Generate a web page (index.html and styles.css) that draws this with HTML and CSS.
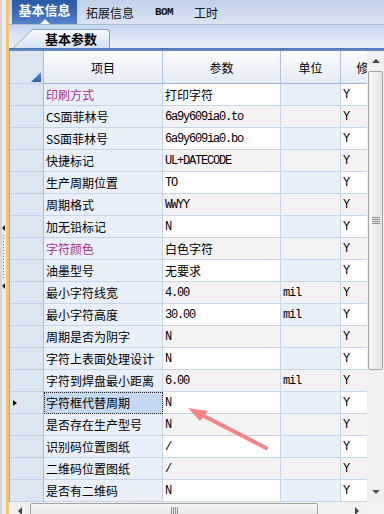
FILE: index.html
```html
<!DOCTYPE html>
<html lang="zh">
<head>
  <meta charset="UTF-8" />
  <title>基本信息</title>
  <link rel="stylesheet" href="styles.css">
</head>
<body>
<div class="app">
  <div class="splitter">
    <span class="lt"></span>
    <span class="dots"></span>
    <span class="lt"></span>
  </div>

  <div class="main">
    <div class="tabs">
      <div class="tab active"><span>基本信息</span><i class="notch"></i></div>
      <div class="tab">拓展信息</div>
      <div class="tab mono">BOM</div>
      <div class="tab">工时</div>
    </div>

    <div class="subtabs">
      <svg class="slant" width="20" height="19" viewBox="0 0 20 19">
        <polygon points="0,19 20,0 20,19" fill="url(#g)" />
        <line x1="0" y1="19" x2="20" y2="0" stroke="#88a3cd" stroke-width="1" />
        <defs>
          <linearGradient id="g" x1="0" y1="0" x2="0" y2="1">
            <stop offset="0" stop-color="#f8fafe" />
            <stop offset="1" stop-color="#d6e2f4" />
          </linearGradient>
        </defs>
      </svg>
      <div class="subtab">基本参数</div>
    </div>
    <div class="rule"></div>

    <div class="body">
      <div class="grid-wrap">
        <div class="grid">
          <div class="row head">
            <div class="c rh corner"><i class="tri"></i></div>
            <div class="c">项目</div>
            <div class="c">参数</div>
            <div class="c">单位</div>
            <div class="c">修改</div>
          </div>

          <div class="row">
            <div class="c rh"></div><div class="c it mag">印刷方式</div>
            <div class="c val">打印字符</div><div class="c unit"></div><div class="c flag">Y</div>
          </div>
          <div class="row even">
            <div class="c rh"></div><div class="c it">CS面菲林号</div>
            <div class="c val en">6a9y609ia0.to</div><div class="c unit"></div><div class="c flag">Y</div>
          </div>
          <div class="row">
            <div class="c rh"></div><div class="c it">SS面菲林号</div>
            <div class="c val en">6a9y609ia0.bo</div><div class="c unit"></div><div class="c flag">Y</div>
          </div>
          <div class="row even">
            <div class="c rh"></div><div class="c it">快捷标记</div>
            <div class="c val en">UL+DATECODE</div><div class="c unit"></div><div class="c flag">Y</div>
          </div>
          <div class="row">
            <div class="c rh"></div><div class="c it">生产周期位置</div>
            <div class="c val en">TO</div><div class="c unit"></div><div class="c flag">Y</div>
          </div>
          <div class="row even">
            <div class="c rh"></div><div class="c it">周期格式</div>
            <div class="c val en">WWYY</div><div class="c unit"></div><div class="c flag">Y</div>
          </div>
          <div class="row">
            <div class="c rh"></div><div class="c it">加无铅标记</div>
            <div class="c val en">N</div><div class="c unit"></div><div class="c flag">Y</div>
          </div>
          <div class="row even">
            <div class="c rh"></div><div class="c it mag">字符颜色</div>
            <div class="c val">白色字符</div><div class="c unit"></div><div class="c flag">Y</div>
          </div>
          <div class="row">
            <div class="c rh"></div><div class="c it">油墨型号</div>
            <div class="c val">无要求</div><div class="c unit"></div><div class="c flag">Y</div>
          </div>
          <div class="row even">
            <div class="c rh"></div><div class="c it">最小字符线宽</div>
            <div class="c val en">4.00</div><div class="c unit en">mil</div><div class="c flag">Y</div>
          </div>
          <div class="row">
            <div class="c rh"></div><div class="c it">最小字符高度</div>
            <div class="c val en">30.00</div><div class="c unit en">mil</div><div class="c flag">Y</div>
          </div>
          <div class="row even">
            <div class="c rh"></div><div class="c it">周期是否为阴字</div>
            <div class="c val en">N</div><div class="c unit"></div><div class="c flag">Y</div>
          </div>
          <div class="row">
            <div class="c rh"></div><div class="c it">字符上表面处理设计</div>
            <div class="c val en">N</div><div class="c unit"></div><div class="c flag">Y</div>
          </div>
          <div class="row even">
            <div class="c rh"></div><div class="c it">字符到焊盘最小距离</div>
            <div class="c val en">6.00</div><div class="c unit en">mil</div><div class="c flag">Y</div>
          </div>
          <div class="row current">
            <div class="c rh"><i class="ptr"></i></div><div class="c it">字符框代替周期</div>
            <div class="c val en">N</div><div class="c unit"></div><div class="c flag">Y</div>
          </div>
          <div class="row even">
            <div class="c rh"></div><div class="c it">是否存在生产型号</div>
            <div class="c val en">N</div><div class="c unit"></div><div class="c flag">Y</div>
          </div>
          <div class="row">
            <div class="c rh"></div><div class="c it">识别码位置图纸</div>
            <div class="c val en">/</div><div class="c unit"></div><div class="c flag">Y</div>
          </div>
          <div class="row even">
            <div class="c rh"></div><div class="c it">二维码位置图纸</div>
            <div class="c val en">/</div><div class="c unit"></div><div class="c flag">Y</div>
          </div>
          <div class="row">
            <div class="c rh"></div><div class="c it">是否有二维码</div>
            <div class="c val en">N</div><div class="c unit"></div><div class="c flag">Y</div>
          </div>
        </div>
      </div>

      <div class="vscroll">
        <div class="btn"><i class="up"></i></div>
        <div class="thumb"><i class="grip"></i></div>
        <div class="track"></div>
        <div class="btn"><i class="down"></i></div>
      </div>
    </div>

    <div class="hscroll">
      <div class="hbtn"><i class="left"></i></div>
      <div class="hthumb"><i class="vgrip"></i></div>
      <div class="htrack"></div>
      <div class="hbtn"><i class="right"></i></div>
      <div class="corner-box"></div>
    </div>
  </div>

  <!-- 标注箭头 -->
  <svg class="note" width="384" height="514" viewBox="0 0 384 514">
    <line x1="266" y1="448" x2="200" y2="414" stroke="#f07a7a" stroke-width="4" stroke-linecap="round" />
    <polygon points="188,408 208,411 200,421" fill="#f07a7a" />
  </svg>
</div>
</body>
</html>
```

FILE: styles.css
```css
body {
  margin: 0;
  width: 384px;
  height: 514px;
  overflow: hidden;
  font-family: "Noto Sans CJK SC", sans-serif;
  font-size: 12px;
  color: #000;
  background: #f0f0f0;
}
.app {
  position: relative;
  display: flex;
  height: 514px;
  overflow: hidden;
}

/* left splitter */
.splitter {
  flex: none;
  width: 6px;
  border-right: 3px solid #f2c67a;
  background: linear-gradient(90deg, #d6d6d6 0 2px, #ededed 2px);
  display: flex;
  flex-direction: column;
  align-items: center;
  justify-content: center;
  gap: 4px;
}
.splitter .lt {
  width: 0;
  height: 0;
  border-top: 3px solid transparent;
  border-bottom: 3px solid transparent;
  border-right: 3px solid #222;
}
.splitter .dots {
  width: 1px;
  height: 44px;
  background: repeating-linear-gradient(#777 0 1px, transparent 1px 3px);
}

.main {
  flex: 1;
  min-width: 0;
  display: flex;
  flex-direction: column;
  overflow: hidden;
}

/* top tabs */
.tabs {
  flex: none;
  height: 24px;
  border-bottom: 1px solid #a9bcd6;
  background: linear-gradient(#bfd0e8, #dbe5f2);
  display: flex;
  padding-left: 3px;
}
.tab {
  display: flex;
  align-items: center;
  padding: 0 12px 0 9px;
  font-size: 12px;
  color: #111;
}
.tab.mono {
  font-family: "Liberation Mono", monospace;
  font-size: 11px;
  font-weight: bold;
  letter-spacing: -0.6px;
}
.tab.active {
  width: 65px;
  padding: 0;
  flex-direction: column;
  justify-content: flex-end;
  background: linear-gradient(#2a59a6, #3b6cba 55%, #5685ca);
  color: #fff;
  font-size: 13px;
  font-weight: bold;
}
.tab.active span { line-height: 19px; }
.notch {
  width: 0;
  height: 0;
  border-left: 5px solid transparent;
  border-right: 5px solid transparent;
  border-bottom: 5px solid #f4f7fc;
}

/* sub tabs */
.subtabs {
  flex: none;
  height: 23px;
  background: linear-gradient(#c6d8f2, #edf2fb);
  display: flex;
  align-items: flex-end;
  padding-left: 4px;
}
.slant { display: block; flex: none; }
.subtab {
  height: 18px;
  line-height: 18px;
  padding: 0 12px 0 12px;
  border: 1px solid #88a3cd;
  border-left: none;
  border-bottom: none;
  border-top-right-radius: 3px;
  background: linear-gradient(#f8fafe, #d6e2f4);
  font-size: 13px;
  font-weight: bold;
}
.rule {
  flex: none;
  height: 3px;
  background: linear-gradient(#4f74ad, #6a8fc6);
}

/* grid */
.body {
  flex: none;
  height: 451px;
  display: flex;
}
.grid-wrap {
  flex: 1;
  overflow: hidden;
  border-left: 1px solid #8ea9cf;
  background: #fff;
}
.grid {
  display: grid;
  grid-template-columns: 34px 119px 118px 60px 56px;
  grid-template-rows: 33px;
  grid-auto-rows: 22px;
  width: max-content;
}
.row { display: contents; }
.c {
  box-sizing: border-box;
  border-right: 1px solid #c6d4ea;
  border-bottom: 1px solid #c6d4ea;
  padding: 0 2px;
  display: flex;
  align-items: center;
  white-space: nowrap;
  overflow: hidden;
  background: #fff;
}
.head .c {
  justify-content: center;
  background: linear-gradient(#fbfcfe, #e4ebf6);
  border-right-color: #b1c3de;
  border-bottom-color: #a3b8d8;
}
.head .corner {
  justify-content: flex-end;
  align-items: flex-end;
  padding: 0 2px 1px 0;
}
.tri {
  width: 10px;
  height: 10px;
  background: linear-gradient(#5b8ad2, #2f63b6);
  clip-path: polygon(100% 0, 100% 100%, 0 100%);
}
.c.rh {
  background: #dce6f3;
  border-right-color: #a9bcd9;
  border-bottom-color: #c3d2e8;
  padding-left: 3px;
}
.c.it { background: #e9f0f9; }
.c.unit { background: #e8f0fb; }
.even .c.val,
.even .c.unit,
.even .c.flag { background: #f3f3f3; }
.mag { color: #a5318f; }
.en {
  font-family: "Liberation Mono", monospace;
  letter-spacing: -1.2px;
}
.c.flag {
  font-family: "Liberation Mono", monospace;
  padding-left: 2px;
}
.current .c.it {
  background: #c5d9f2;
  outline: 1px dotted #222;
  outline-offset: -1px;
}
.ptr {
  width: 0;
  height: 0;
  border-top: 3px solid transparent;
  border-bottom: 3px solid transparent;
  border-left: 4px solid #111;
}

/* vertical scrollbar */
.vscroll {
  flex: none;
  width: 17px;
  background: #f0f0f0;
  display: flex;
  flex-direction: column;
}
.btn {
  height: 20px;
  display: flex;
  align-items: center;
  justify-content: center;
}
.up, .down {
  width: 0;
  height: 0;
  border-left: 4px solid transparent;
  border-right: 4px solid transparent;
}
.up { border-bottom: 4px solid #444; }
.down { border-top: 4px solid #555; }
.thumb {
  flex: none;
  height: 297px;
  margin: 0 1px 0 1px;
  border: 1px solid #a3a3a3;
  border-radius: 2px;
  background: linear-gradient(90deg, #f6f6f6, #e4e4e4);
  display: flex;
  align-items: center;
  justify-content: center;
}
.grip {
  width: 8px;
  height: 7px;
  background: repeating-linear-gradient(#8c8c8c 0 1px, transparent 1px 2px);
}
.track { flex: 1; }

/* horizontal scrollbar */
.hscroll {
  flex: none;
  height: 17px;
  display: flex;
  background: #f0f0f0;
  padding-left: 1px;
}
.hbtn {
  width: 20px;
  display: flex;
  align-items: center;
  justify-content: center;
}
.left, .right {
  width: 0;
  height: 0;
  border-top: 4px solid transparent;
  border-bottom: 4px solid transparent;
}
.left { border-right: 4px solid #444; }
.right { border-left: 4px solid #444; }
.hthumb {
  width: 286px;
  margin-top: 1px;
  border: 1px solid #a3a3a3;
  border-radius: 2px;
  background: linear-gradient(#f6f6f6, #e4e4e4);
  display: flex;
  justify-content: center;
  align-items: center;
}
.vgrip {
  width: 7px;
  height: 8px;
  background: repeating-linear-gradient(90deg, #8c8c8c 0 1px, transparent 1px 2px);
}
.htrack { width: 29px; }
.corner-box { flex: 1; background: #f3f3f3; }

/* annotation */
.note {
  position: absolute;
  left: 0;
  top: 0;
  pointer-events: none;
  opacity: 0.9;
}
```
